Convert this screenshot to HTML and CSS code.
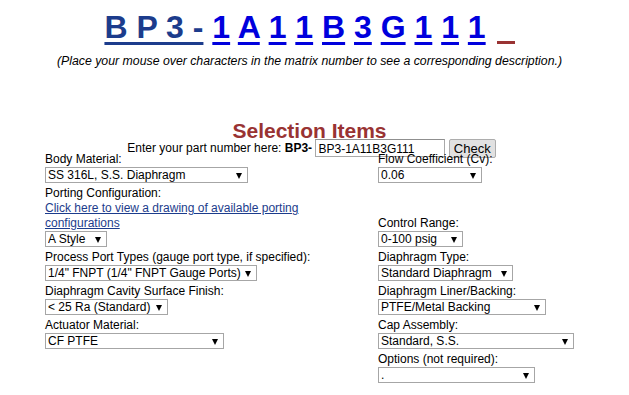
FILE: index.html
```html
<!DOCTYPE html>
<html lang="en">
<head>
    <meta charset="UTF-8">
    <title>BP3 Part Number Configurator</title>
    <link rel="stylesheet" href="styles.css">
</head>
<body>
    <h1 class="matrix">
        <a class="base" href="#">B P 3 -</a>
        <a href="#">1</a>
        <a href="#">A</a>
        <a href="#">1</a>
        <a href="#">1</a>
        <a href="#">B</a>
        <a href="#">3</a>
        <a href="#">G</a>
        <a href="#">1</a>
        <a href="#">1</a>
        <a href="#">1</a>
        <span class="blank"></span>
    </h1>
    <p class="hint">(Place your mouse over characters in the matrix number to see a corresponding description.)</p>

    <h2 class="section">Selection Items</h2>

    <form class="lookup">
        Enter your part number here: <b>BP3-</b>
        <input class="part-input" type="text" value="BP3-1A11B3G111">
        <button class="check" type="button">Check</button>
    </form>

    <div class="options">
        <div class="field">
            <label>Body Material:</label>
            <span class="pick"><select class="w-body"><option>SS 316L, S.S. Diaphragm</option></select></span>
        </div>
        <div class="field">
            <label>Flow Coefficient (Cv):</label>
            <span class="pick"><select class="w-cv"><option>0.06</option></select></span>
        </div>

        <div class="field">
            <label>Porting Configuration:</label>
            <a class="drawing" href="#">Click here to view a drawing of available porting configurations</a>
            <span class="pick"><select class="w-port"><option>A Style</option></select></span>
        </div>
        <div class="field">
            <label>Control Range:</label>
            <span class="pick"><select class="w-range"><option>0-100 psig</option></select></span>
        </div>

        <div class="field">
            <label>Process Port Types (gauge port type, if specified):</label>
            <span class="pick"><select class="w-ptype"><option>1/4" FNPT (1/4" FNPT Gauge Ports)</option></select></span>
        </div>
        <div class="field">
            <label>Diaphragm Type:</label>
            <span class="pick"><select class="w-dtype"><option>Standard Diaphragm</option></select></span>
        </div>

        <div class="field">
            <label>Diaphragm Cavity Surface Finish:</label>
            <span class="pick"><select class="w-finish"><option>&lt; 25 Ra (Standard)</option></select></span>
        </div>
        <div class="field">
            <label>Diaphragm Liner/Backing:</label>
            <span class="pick"><select class="w-liner"><option>PTFE/Metal Backing</option></select></span>
        </div>

        <div class="field">
            <label>Actuator Material:</label>
            <span class="pick"><select class="w-actuator"><option>CF PTFE</option></select></span>
        </div>
        <div class="field">
            <label>Cap Assembly:</label>
            <span class="pick"><select class="w-cap"><option>Standard, S.S.</option></select></span>
        </div>

        <div class="field"></div>
        <div class="field">
            <label>Options (not required):</label>
            <span class="pick"><select class="w-options"><option>.</option></select></span>
        </div>
    </div>
</body>
</html>
```

FILE: styles.css
```css
/* Part number configurator */
body {
    margin: 0;
    font-family: "Liberation Sans", Arial, sans-serif;
    font-size: 12px;
    color: #000;
    background: #fff;
}
.matrix {
    margin: 9px 0 0 0;
    padding-right: 10px;
    text-align: center;
    font-size: 32px;
    font-weight: bold;
    line-height: 37px;
}
.matrix a {
    color: #0000dd;
    text-decoration: underline;
    text-decoration-thickness: 3px;
    text-underline-offset: 4px;
}
.matrix a.base {
    color: #1c3c8c;
}
.matrix .blank {
    display: inline-block;
    width: 18px;
    height: 3px;
    margin-left: 2px;
    background: #993333;
    vertical-align: -6px;
}
.hint {
    margin: 8px 0 0 0;
    padding-right: 10px;
    text-align: center;
    font-style: italic;
    font-size: 12.3px;
}
.section {
    margin: 52px 0 0 0;
    padding-right: 10px;
    text-align: center;
    color: #993333;
    font-size: 21px;
    line-height: 22px;
}
.lookup {
    margin: -3px 0 0 0;
    padding-right: 6px;
    text-align: center;
    line-height: 18px;
}
.part-input {
    width: 124px;
    height: 15px;
    padding: 1px 2px 0 2px;
    margin: 0;
    border: 1px solid #a9a9a9;
    border-top-color: #8f8f8f;
    font-family: "Liberation Sans", Arial, sans-serif;
    font-size: 12px;
    vertical-align: top;
}
.check {
    height: 19px;
    padding: 0 4px;
    margin-left: 0;
    border: 1px solid #adadad;
    border-radius: 2px;
    background: #e1e1e1;
    font-family: "Liberation Sans", Arial, sans-serif;
    font-size: 13px;
    line-height: 15px;
    vertical-align: top;
}
/* two column selection grid */
.options {
    display: grid;
    grid-template-columns: 333px 240px;
    align-items: end;
    margin: -6px 0 0 45px;
}
.field {
    display: flex;
    flex-direction: column;
    align-items: flex-start;
}
.field label {
    line-height: 15px;
}
.drawing {
    max-width: 290px;
    color: #1c3c8c;
    line-height: 15px;
    text-decoration: underline;
}
.pick {
    position: relative;
    display: inline-block;
    margin: 0 0 3px 0;
}
.pick::after {
    content: "";
    position: absolute;
    right: 6px;
    top: 6px;
    border-left: 3.5px solid transparent;
    border-right: 3.5px solid transparent;
    border-top: 6px solid #000;
    pointer-events: none;
}
.pick select {
    appearance: none;
    -webkit-appearance: none;
    display: block;
    height: 16px;
    margin: 0;
    padding: 0 0 0 2px;
    border: 1px solid #a6a6a6;
    border-radius: 0;
    background: #fff;
    color: #000;
    font-family: "Liberation Sans", Arial, sans-serif;
    font-size: 12px;
    line-height: 14px;
}
.w-body { width: 203px; }
.w-cv { width: 104px; }
.w-port { width: 62px; }
.w-range { width: 85px; }
.w-ptype { width: 212px; }
.w-dtype { width: 135px; }
.w-finish { width: 123px; }
.w-liner { width: 168px; }
.w-actuator { width: 179px; }
.w-cap { width: 196px; }
.w-options { width: 157px; }
```
